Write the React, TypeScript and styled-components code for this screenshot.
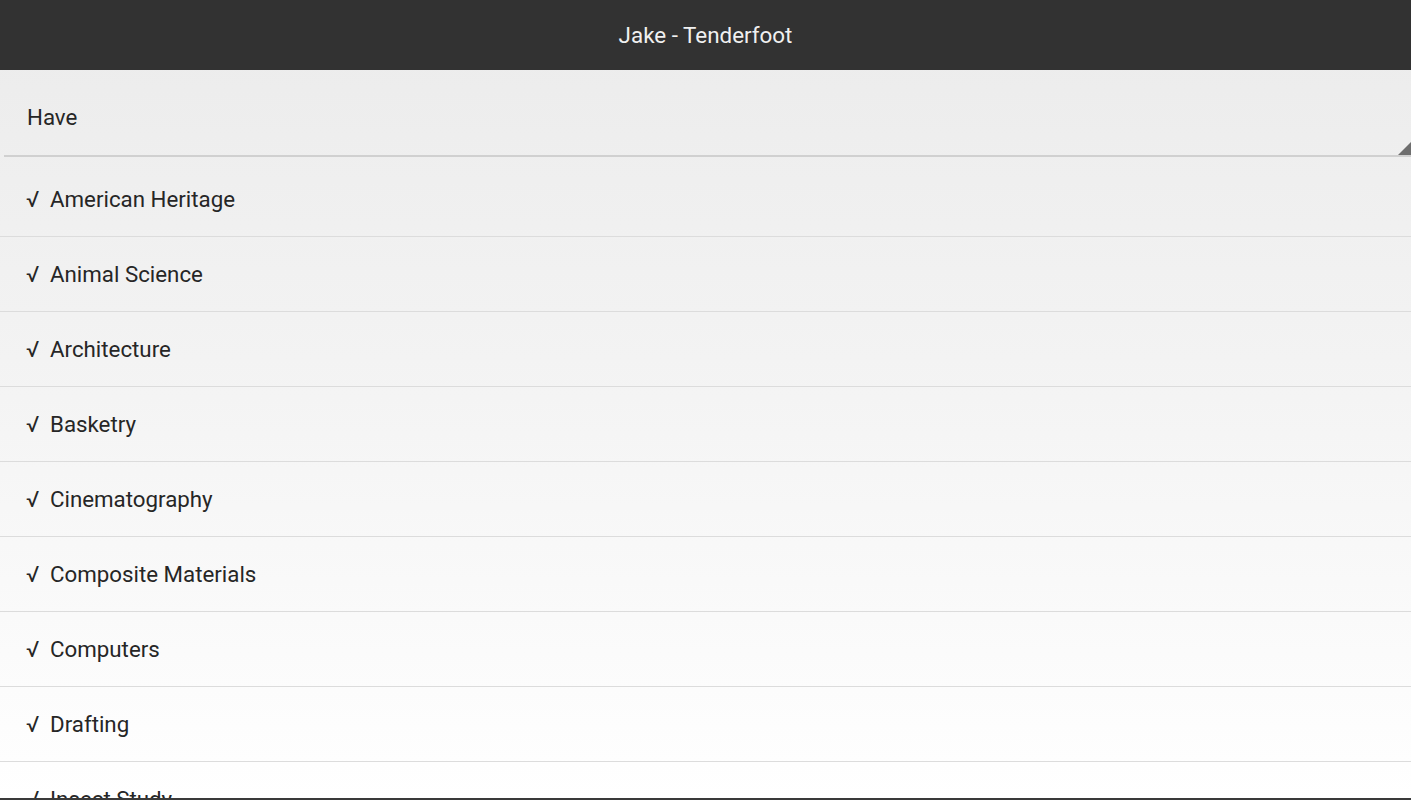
import React from "react";
import styled, { createGlobalStyle } from "styled-components";

const GlobalStyle = createGlobalStyle`
  html, body {
    margin: 0;
    padding: 0;
    overflow: hidden;
  }
  body {
    font-family: Roboto, "Noto Sans", sans-serif;
  }
`;

const Screen = styled.div`
  display: flex;
  flex-direction: column;
  width: 1411px;
  height: 800px;
  background: linear-gradient(to bottom, #ebebeb 0%, #f3f3f3 45%, #ffffff 100%);
`;

const ActionBar = styled.header`
  flex: 0 0 70px;
  display: flex;
  align-items: center;
  justify-content: center;
  background: #323232;
  color: #f0f0f0;
  font-size: 22.4px;
`;

const Spinner = styled.div`
  position: relative;
  flex: 0 0 87px;
  display: flex;
  align-items: center;
  box-sizing: border-box;
  margin-left: 4px;
  padding: 8px 0 0 23px;
  border-bottom: 2px solid #d0d0d0;
  color: #262626;
  font-size: 22.3px;
`;

const Corner = styled.span`
  position: absolute;
  right: 0;
  bottom: 0;
  width: 0;
  height: 0;
  border-style: solid;
  border-width: 0 0 13px 13px;
  border-color: transparent transparent #6e6e6e transparent;
`;

const List = styled.ul`
  flex: 1;
  list-style: none;
  margin: 0;
  padding: 5px 0 0;
  overflow: hidden;
`;

const Row = styled.li`
  display: flex;
  align-items: center;
  flex-shrink: 0;
  height: 74px;
  border-bottom: 1px solid #dcdcdc;
  padding-left: 26px;
  color: #262626;
  font-size: 22.3px;
`;

const Check = styled.span`
  width: 24px;
`;

const BottomEdge = styled.div`
  flex: 0 0 2px;
  background: #3a3a3a;
`;

const badges = [
  "American Heritage",
  "Animal Science",
  "Architecture",
  "Basketry",
  "Cinematography",
  "Composite Materials",
  "Computers",
  "Drafting",
  "Insect Study",
];

const App: React.FC = (): JSX.Element => {
  return (
    <Screen>
      <GlobalStyle />
      <ActionBar>Jake - Tenderfoot</ActionBar>
      <Spinner>
        Have
        <Corner />
      </Spinner>
      <List>
        {badges.map((name) => (
          <Row key={name}>
            <Check>√</Check>
            {name}
          </Row>
        ))}
      </List>
      <BottomEdge />
    </Screen>
  );
};

export default App;
